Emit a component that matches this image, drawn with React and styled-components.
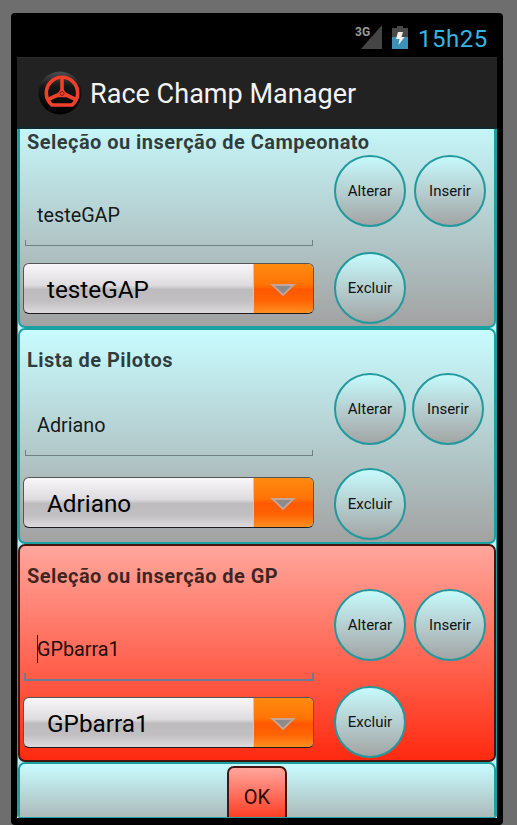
import React from "react";
import styled, { createGlobalStyle } from "styled-components";

const GlobalStyle = createGlobalStyle`
  * {
    box-sizing: border-box;
  }
  body {
    margin: 0;
    background-color: #6e6e6e;
    overflow: hidden;
    font-family: Roboto, "Noto Sans", sans-serif;
  }
`;

const Page = styled.div`
  height: 825px;
  padding: 13px 14px 0 11px;
`;

const Phone = styled.div`
  height: 812px;
  padding: 0 6px 7px;
  border-radius: 4px;
  background-color: #000;
`;

const StatusBar = styled.div`
  display: flex;
  justify-content: flex-end;
  height: 44px;
  padding: 12px 9px 0 0;
`;

const Network = styled.svg`
  width: 28px;
  height: 24px;
  margin-right: 9px;
`;

const Battery = styled.svg`
  width: 16px;
  height: 24px;
  margin-right: 10px;
`;

const Clock = styled.div`
  width: 70px;
  color: #33b5e5;
  font-size: 24px;
  font-weight: 400;
  letter-spacing: 0.5px;
  line-height: 28px;
  white-space: nowrap;
`;

const ActionBar = styled.header`
  display: flex;
  align-items: center;
  height: 72px;
  padding-left: 21px;
  border-top: 1px solid #2c2c2c;
  border-bottom: 2px solid #0e2c2f;
  background-color: #222;
`;

const Logo = styled.svg`
  width: 44px;
  height: 46px;
`;

const AppTitle = styled.h1`
  margin: 2px 0 0 8px;
  color: #f3f3f3;
  font-size: 27px;
  font-weight: 400;
  letter-spacing: 0.03px;
  white-space: nowrap;
`;

const Content = styled.main`
  height: 689px;
  overflow: hidden;
  background-color: #fff;
`;

const ScrollArea = styled.div`
  height: 708px;
  margin-top: -19px;
  border: 1px solid #1ba0a2;
  border-top: 0;
  border-radius: 0 0 3px 3px;
  background-color: #b9f3f6;
  overflow: hidden;
`;

const Panel = styled.section`
  height: ${(props) => props.$height}px;
  padding: 20px 0 0 3px;
  border: 2px solid ${(props) => (props.$active ? "#45140f" : "#1ba0a2")};
  border-radius: 7px;
  background: ${(props) =>
    props.$active
      ? "linear-gradient(#ffa69c, #ff6350 55%, #ff2a10)"
      : "linear-gradient(#c8fcff, #a2a2a2)"};
`;

const PanelTitle = styled.h2`
  margin: 0 0 3px 4px;
  color: rgba(0, 0, 0, 0.75);
  font-size: 20px;
  font-weight: 700;
  letter-spacing: 0.46px;
  line-height: 20px;
  white-space: nowrap;
`;

const PanelBody = styled.div`
  display: flex;
  gap: 20px;
`;

const Fields = styled.div`
  width: 291px;
`;

const Field = styled.div`
  display: flex;
  flex-direction: column;
  justify-content: flex-end;
  height: ${(props) => props.$height}px;
  margin-bottom: ${(props) => props.$gap}px;
`;

const FieldText = styled.div`
  display: flex;
  align-items: center;
  height: 28px;
  margin: 0 0 ${(props) => (props.$focused ? 10 : 11)}px 14px;
  border-left: 1px solid
    ${(props) => (props.$focused ? "#2a0a08" : "transparent")};
  color: rgba(0, 0, 0, 0.9);
  font-size: 19.8px;
  text-indent: -1px;
`;

const Underline = styled.div`
  height: ${(props) => (props.$focused ? 8 : 6)}px;
  margin-left: ${(props) => (props.$focused ? 1 : 2)}px;
  margin-right: ${(props) => (props.$focused ? 0 : 1)}px;
  border: ${(props) =>
    props.$focused ? "2px solid #6c7c94" : "1px solid #6f8283"};
  border-top: 0;
`;

const Spinner = styled.div`
  display: flex;
  height: 51px;
  border: 1px solid #555;
  border-bottom-color: #1c1c1c;
  border-radius: 6px;
  overflow: hidden;
  background: linear-gradient(
    #f9f7f9,
    #dddbdd 44%,
    #bdbbbd 52%,
    #c1bfc1 75%,
    #dcdadc
  );
`;

const SpinnerText = styled.div`
  flex: 1;
  padding-left: 23px;
  color: #000;
  font-size: 24.3px;
  line-height: 52px;
`;

const SpinnerArrow = styled.div`
  display: flex;
  align-items: center;
  justify-content: center;
  width: 60px;
  padding: 3px 2px 0 0;
  border-left: 1px solid #ffc060;
  background: linear-gradient(#ff8a10, #ff7405 42%, #ff5800 52%, #ff6404 75%, #ff8f20);
`;

const Buttons = styled.div`
  display: grid;
  grid-template-columns: 72px 72px;
  column-gap: ${(props) => props.$columnGap}px;
  row-gap: ${(props) => props.$rowGap}px;
  align-content: start;
`;

const RoundButton = styled.button`
  width: 72px;
  height: 72px;
  padding: 0;
  border: 2px solid #22999c;
  border-radius: 50%;
  background: linear-gradient(#c8fcff, #a2a2a2) border-box;
  color: #111;
  font-family: inherit;
  font-size: 15px;
`;

const Footer = styled.footer`
  display: flex;
  justify-content: center;
  height: 76px;
  padding: 2px 0 0 0;
  border: 2px solid #1ba0a2;
  border-radius: 7px;
  background: linear-gradient(#c8fcff, #a2a2a2);
`;

const OkButton = styled.button`
  width: 60px;
  height: 62px;
  padding: 0;
  border: 2px solid #45140f;
  border-radius: 7px;
  background: linear-gradient(#ffa69c, #ff6350 55%, #ff2a10);
  color: #2b0b08;
  font-family: inherit;
  font-size: 20px;
`;

const sections = [
  {
    title: "Seleção ou inserção de Campeonato",
    value: "testeGAP",
    height: 218,
    fieldHeight: 91,
    fieldGap: 17,
    columnGap: 8,
    rowGap: 25,
  },
  {
    title: "Lista de Pilotos",
    value: "Adriano",
    height: 216,
    fieldHeight: 83,
    fieldGap: 21,
    columnGap: 6,
    rowGap: 23,
  },
  {
    title: "Seleção ou inserção de GP",
    value: "GPbarra1",
    height: 218,
    fieldHeight: 92,
    fieldGap: 16,
    columnGap: 8,
    rowGap: 25,
    active: true,
  },
];

const SectionPanel = ({ section }) => {
  return (
    <Panel $height={section.height} $active={section.active}>
      <PanelTitle>{section.title}</PanelTitle>
      <PanelBody>
        <Fields>
          <Field $height={section.fieldHeight} $gap={section.fieldGap}>
            <FieldText $focused={section.active}>{section.value}</FieldText>
            <Underline $focused={section.active} />
          </Field>
          <Spinner>
            <SpinnerText>{section.value}</SpinnerText>
            <SpinnerArrow>
              <svg width="26" height="14" viewBox="0 0 26 14">
                <path d="M2.500 2H23.500L13 12Z" fill="#8c8a8a" stroke="#c5a595" strokeWidth="1.8" />
              </svg>
            </SpinnerArrow>
          </Spinner>
        </Fields>
        <Buttons $columnGap={section.columnGap} $rowGap={section.rowGap}>
          <RoundButton>Alterar</RoundButton>
          <RoundButton>Inserir</RoundButton>
          <RoundButton>Excluir</RoundButton>
        </Buttons>
      </PanelBody>
    </Panel>
  );
};

const WheelLogo = () => (
  <Logo viewBox="0 0 44 46">
    <defs>
      <linearGradient id="ball" x1="0" y1="0" x2="0" y2="1">
        <stop offset="0" stopColor="#4c4f50" />
        <stop offset="0.35" stopColor="#151616" />
        <stop offset="1" stopColor="#000" />
      </linearGradient>
    </defs>
    <circle cx="22" cy="23" r="21.5" fill="url(#ball)" />
    <g fill="none" stroke="#f0402c" strokeWidth="3.6" strokeLinejoin="round">
      <path d="M14 35A15.700 15.700 0 1 1 34 35Z" />
      <path d="M24 8V22M9 30L24 23L39 30" />
      <path d="M24 18.500L18.500 26.500H29.500Z" fill="#f0402c" strokeWidth="1.5" />
    </g>
    <circle cx="24" cy="23.500" r="2" fill="none" stroke="#8c1f14" />
  </Logo>
);

const App = () => {
  return (
    <Page>
      <GlobalStyle />
      <Phone>
        <StatusBar>
          <Network viewBox="0 0 28 24">
            <path d="M27 0V24H6Z" fill="#454545" />
            <text x="0" y="11" fill="#9a9a9a" fontSize="12" fontWeight="700">
              3G
            </text>
          </Network>
          <Battery viewBox="0 0 16 24">
            <path d="M5 1H11V3H16V12H0V3H5Z" fill="#484848" />
            <path d="M0 12H16V24H0Z" fill="#3d91b8" />
            <path d="M6 7H11L9.500 12H12.500L6.500 20L7.500 14H4Z" fill="#f4f0e8" />
          </Battery>
          <Clock>15h25</Clock>
        </StatusBar>
        <ActionBar>
          <WheelLogo />
          <AppTitle>Race Champ Manager</AppTitle>
        </ActionBar>
        <Content>
          <ScrollArea>
            {sections.map((section) => (
              <SectionPanel key={section.title} section={section} />
            ))}
            <Footer>
              <OkButton>OK</OkButton>
            </Footer>
          </ScrollArea>
        </Content>
      </Phone>
    </Page>
  );
};

export default App;
